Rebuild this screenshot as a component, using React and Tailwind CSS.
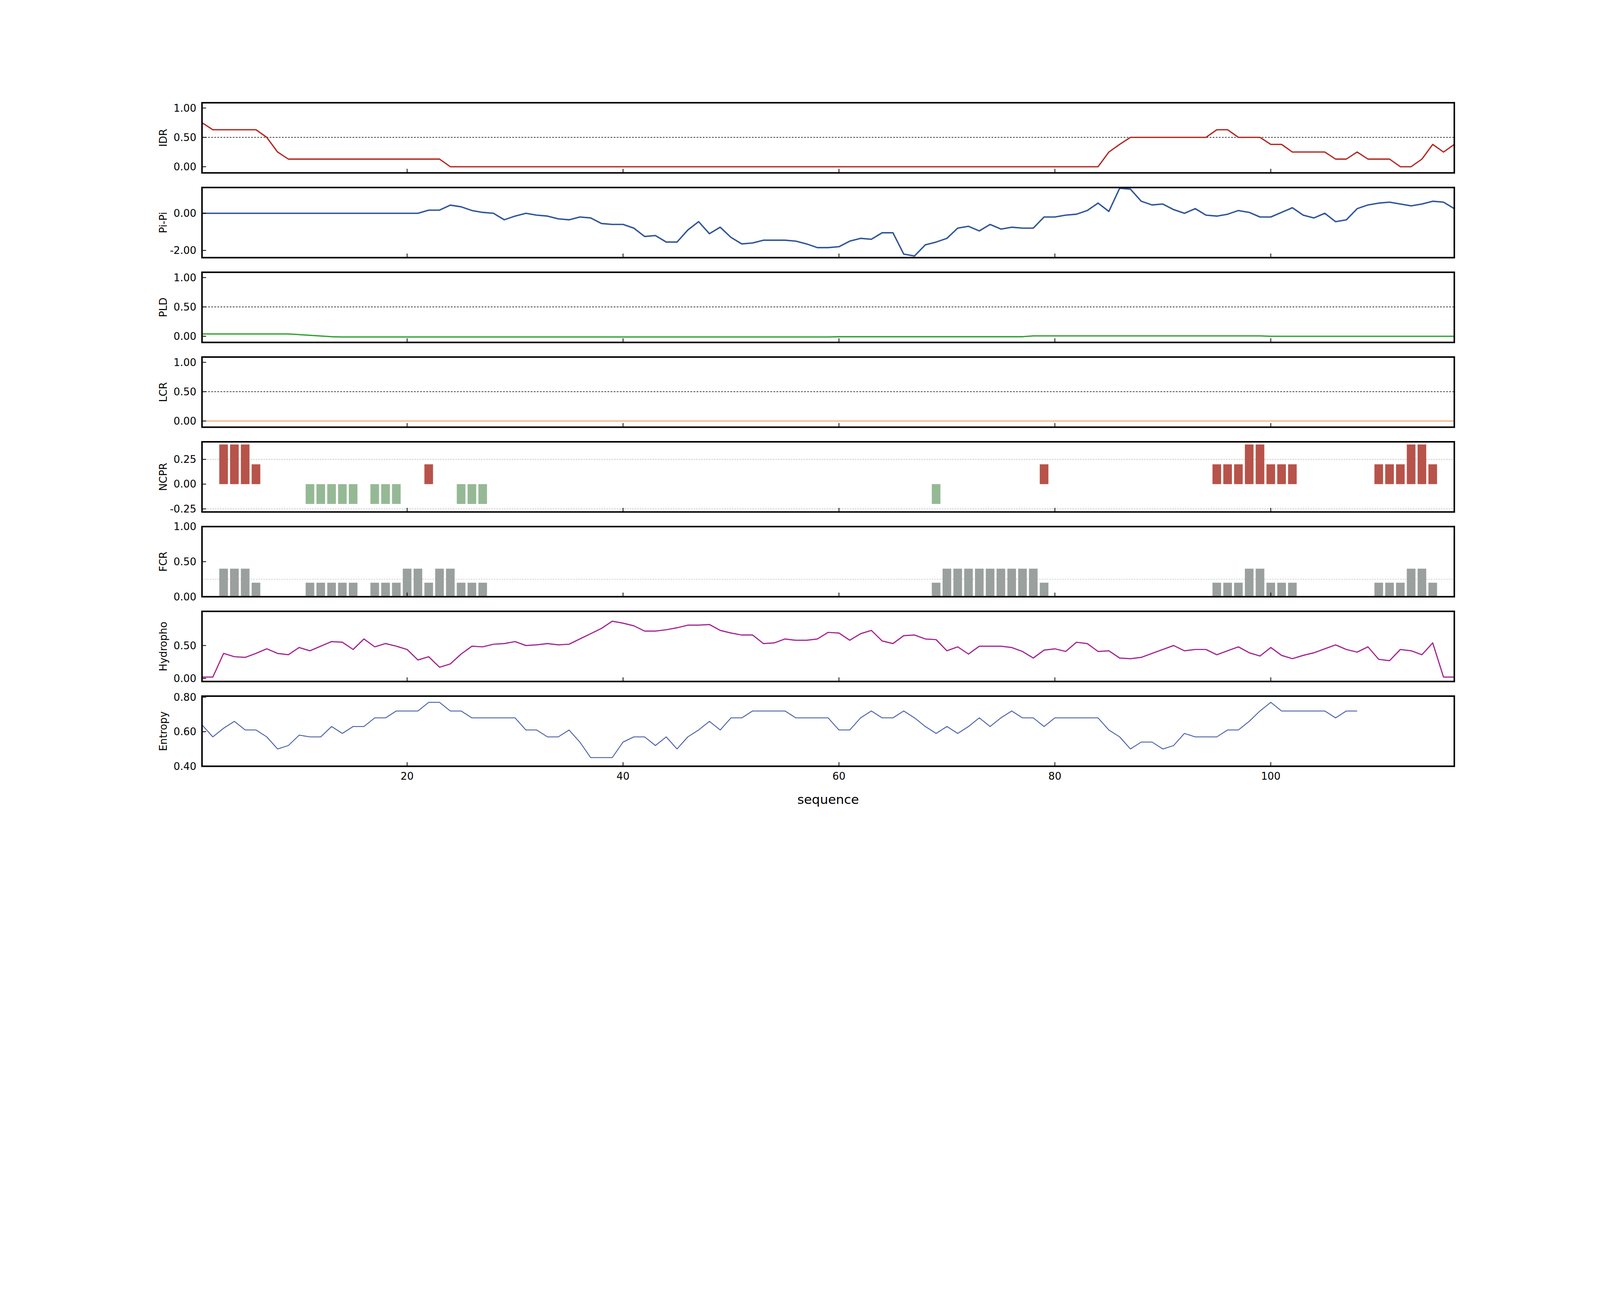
import React from "react";

const L = 789, R = 5681, H = 274;
const px = (x) => L + (x - 1) * ((R - L) / 116);
const FONT = "'DejaVu Sans', sans-serif";

const rng = (a, b) => Array.from({ length: b - a + 1 }, (_, i) => a + i);

function fromMap(m, end = 117) {
  const out = [];
  let last = 0;
  for (let x = 1; x <= end; x++) {
    if (m[x] !== undefined) last = m[x];
    out.push([x, last]);
  }
  return out;
}

const idr = fromMap({1:.75,2:.63,7:.5,8:.25,9:.13,24:0,85:.25,86:.38,87:.5,95:.63,97:.5,100:.38,102:.25,106:.13,108:.25,109:.13,112:0,114:.13,115:.38,116:.25,117:.38});
const pipiVals = [0,0,0,0,0,0,0,0,0,0,0,0,0,0,0,0,0,0,0,0,0,.17,.17,.44,.35,.15,.05,0,-.35,-.15,0,-.1,-.15,-.3,-.35,-.2,-.25,-.55,-.6,-.6,-.8,-1.25,-1.2,-1.55,-1.55,-.9,-.45,-1.1,-.75,-1.3,-1.65,-1.6,-1.45,-1.45,-1.45,-1.5,-1.65,-1.85,-1.85,-1.8,-1.5,-1.35,-1.4,-1.05,-1.05,-2.2,-2.3,-1.7,-1.55,-1.35,-.8,-.7,-.95,-.6,-.85,-.75,-.8,-.8,-.2,-.2,-.1,-.05,.15,.55,.1,1.35,1.3,.65,.45,.5,.2,0,.25,-.1,-.15,-.05,.15,.05,-.2,-.2,.05,.3,-.1,-.25,0,-.45,-.35,.25,.45,.55,.6,.5,.4,.5,.65,.6,.25];
const pipi = pipiVals.map((v, i) => [i + 1, v]);
const pld = rng(1, 117).map((x) => [x, x < 10 ? 0.04 : x < 14 ? 0.04 - (x - 9) * 0.012 : x < 60 ? -0.012 : x < 78 ? -0.008 : x < 100 ? 0.006 : 0.0]);
const lcr = rng(1, 117).map((x) => [x, 0]);
const hydVals = [.02,.02,.38,.33,.32,.38,.45,.38,.36,.47,.42,.49,.56,.55,.44,.6,.48,.53,.49,.44,.28,.33,.17,.22,.37,.49,.48,.52,.53,.56,.5,.51,.53,.51,.52,.6,.68,.76,.87,.84,.8,.72,.72,.74,.77,.81,.81,.82,.73,.69,.66,.66,.53,.54,.6,.58,.58,.6,.7,.69,.58,.68,.73,.57,.53,.65,.66,.6,.59,.42,.48,.37,.49,.49,.49,.47,.41,.31,.43,.45,.41,.55,.53,.41,.42,.31,.3,.32,.38,.44,.5,.42,.44,.44,.36,.42,.48,.39,.34,.47,.35,.3,.35,.39,.45,.51,.44,.4,.48,.29,.27,.44,.42,.36,.54,.02,.02];
const hyd = hydVals.map((v, i) => [i + 1, v]);
const entVals = [.64,.57,.62,.66,.61,.61,.57,.5,.52,.58,.57,.57,.63,.59,.63,.63,.68,.68,.72,.72,.72,.77,.77,.72,.72,.68,.68,.68,.68,.68,.61,.61,.57,.57,.61,.54,.45,.45,.45,.54,.57,.57,.52,.57,.5,.57,.61,.66,.61,.68,.68,.72,.72,.72,.72,.68,.68,.68,.68,.61,.61,.68,.72,.68,.68,.72,.68,.63,.59,.63,.59,.63,.68,.63,.68,.72,.68,.68,.63,.68,.68,.68,.68,.68,.61,.57,.5,.54,.54,.5,.52,.59,.57,.57,.57,.61,.61,.66,.72,.77,.72,.72,.72,.72,.72,.68,.72,.72];
const ent = entVals.map((v, i) => [i + 1, v]);

const barsFrom = (spec) => spec.flatMap(([xs, v]) => xs.map((x) => [x, v]));
const ncpr = barsFrom([[[3,4,5],.4],[[6],.2],[rng(11,15),-.2],[rng(17,19),-.2],[[22],.2],[rng(25,27),-.2],[[69],-.2],[[79],.2],[[95,96,97],.2],[[98,99],.4],[[100,101,102],.2],[[110,111,112],.2],[[113,114],.4],[[115],.2]]);
const fcr = barsFrom([[[3,4,5],.4],[[6],.2],[rng(11,15),.2],[rng(17,19),.2],[[20,21],.4],[[22],.2],[[23,24],.4],[rng(25,27),.2],[[69],.2],[rng(70,78),.4],[[79],.2],[[95,96,97],.2],[[98,99],.4],[[100,101,102],.2],[[110,111,112],.2],[[113,114],.4],[[115],.2]]);

const panels = [
  { label: "IDR", ylim: [-0.105, 1.09], ticks: [[1,"1.00"],[.5,"0.50"],[0,"0.00"]], line: idr, color: "#b3261e", w: 5, hl: [[.5,"#222",2.5,"7 5"]] },
  { label: "Pi-Pi", ylim: [-2.39, 1.39], ticks: [[0,"0.00"],[-2,"-2.00"]], line: pipi, color: "#2f5597", w: 5.5, hl: [] },
  { label: "PLD", ylim: [-0.105, 1.09], ticks: [[1,"1.00"],[.5,"0.50"],[0,"0.00"]], line: pld, color: "#2ca02c", w: 5, hl: [[.5,"#222",2.5,"7 5"]] },
  { label: "LCR", ylim: [-0.105, 1.09], ticks: [[1,"1.00"],[.5,"0.50"],[0,"0.00"]], line: lcr, color: "#f2a06b", w: 4, hl: [[.5,"#222",2.5,"7 5"]] },
  { label: "NCPR", ylim: [-0.281, 0.427], ticks: [[.25,"0.25"],[0,"0.00"],[-.25,"-0.25"]], bars: ncpr, hl: [[.25,"#aaa",2,"6 4"],[-.25,"#aaa",2,"6 4"]] },
  { label: "FCR", ylim: [0, 1], ticks: [[1,"1.00"],[.5,"0.50"],[0,"0.00"]], bars: fcr, bc: "#9aa09e", hl: [[.25,"#bbb",2,"6 4"]] },
  { label: "Hydropho", ylim: [-0.047, 1.02], ticks: [[.5,"0.50"],[0,"0.00"]], line: hyd, color: "#a3228f", w: 4.5, hl: [] },
  { label: "Entropy", ylim: [0.4, 0.806], ticks: [[.8,"0.80"],[.6,"0.60"],[.4,"0.40"]], line: ent, color: "#4a5fa6", w: 3.5, hl: [], xlabels: true },
];

function Panel({ p }) {
  const [y0, y1] = p.ylim;
  const py = (v) => H - ((v - y0) / (y1 - y0)) * H;
  const bw = ((R - L) / 116) * 0.8;
  return (
    <svg viewBox={`0 0 6250 ${H}`} width="100%" className="block h-auto overflow-visible">
      {p.hl.map(([v, c, sw, da], i) => (
        <line key={i} x1={L} x2={R} y1={py(v)} y2={py(v)} stroke={c} strokeWidth={sw} strokeDasharray={da} />
      ))}
      {p.bars && p.bars.map(([x, v], i) => {
        const c = p.bc || (v > 0 ? "#b7534a" : "#95b994");
        const a = py(Math.max(v, 0)), b = py(Math.min(v, 0));
        return <rect key={i} x={px(x) - bw / 2} y={a} width={bw} height={b - a} fill={c} />;
      })}
      {p.line && (
        <polyline fill="none" stroke={p.color} strokeWidth={p.w} strokeLinejoin="round"
          points={p.line.map(([x, v]) => `${px(x)},${py(v)}`).join(" ")} />
      )}
      {p.ticks.map(([v, t]) => (
        <g key={t}>
          <line x1={L} x2={L + 16} y1={py(v)} y2={py(v)} stroke="#000" strokeWidth="3" />
          <text x={L - 22} y={py(v) + 14} textAnchor="end" fontFamily={FONT} fontSize="40" fill="#000">{t}</text>
        </g>
      ))}
      {[20, 40, 60, 80, 100].map((x) => (
        <g key={x}>
          <line x1={px(x)} x2={px(x)} y1={H} y2={H - 16} stroke="#000" strokeWidth="3" />
          {p.xlabels && <text x={px(x)} y={H + 52} textAnchor="middle" fontFamily={FONT} fontSize="40" fill="#000">{x}</text>}
        </g>
      ))}
      <rect x={L} y={0} width={R - L} height={H} fill="none" stroke="#000" strokeWidth="6" />
      <text transform={`translate(652 ${H / 2}) rotate(-90)`} textAnchor="middle" fontFamily={FONT} fontSize="40" fill="#000">{p.label}</text>
    </svg>
  );
}

export default function App() {
  return (
    <div className="w-full aspect-[6250/3333] bg-white pt-[6.432vw] overflow-hidden">
      <div className="flex flex-col gap-[0.912vw]">
        {panels.map((p) => <Panel key={p.label} p={p} />)}
      </div>
      <div className="w-full flex mt-[1.7vw]">
        <div className="ml-[12.624vw] w-[78.27vw] text-center text-[0.8vw] leading-none text-black" style={{ fontFamily: FONT }}>sequence</div>
      </div>
    </div>
  );
}
